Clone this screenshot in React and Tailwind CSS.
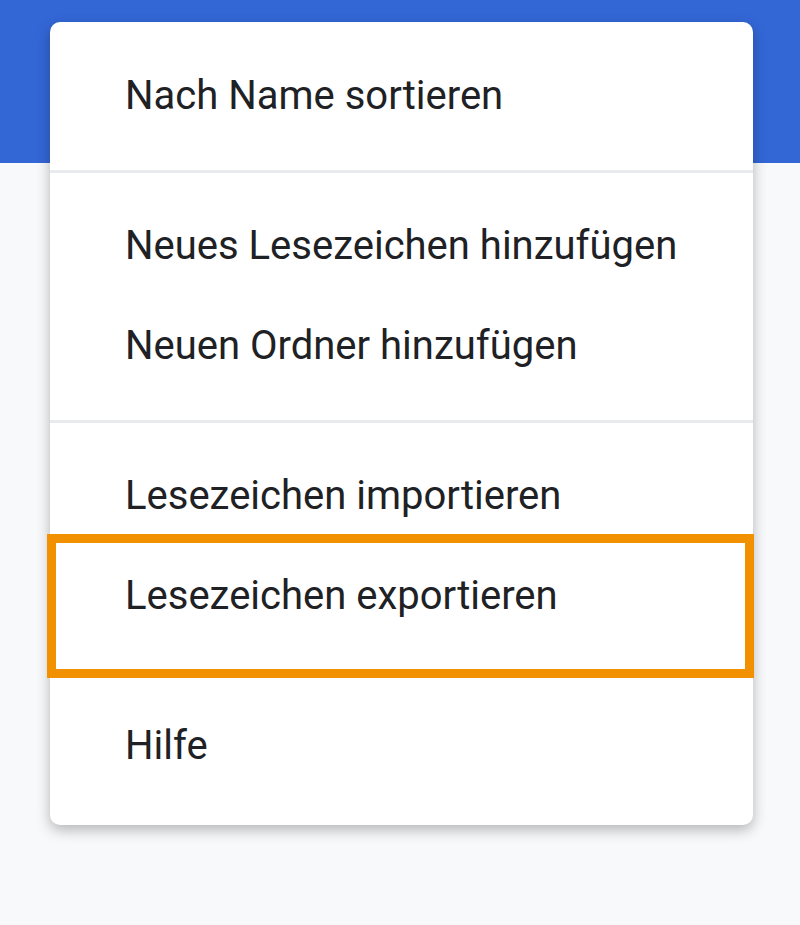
const sections = [
  ['Nach Name sortieren'],
  ['Neues Lesezeichen hinzufügen', 'Neuen Ordner hinzufügen'],
  ['Lesezeichen importieren', 'Lesezeichen exportieren'],
  ['Hilfe'],
];

export default function App() {
  return (
    <div className="relative h-[925px] w-[800px] overflow-hidden bg-[#f8f9fa] font-['Roboto','Liberation_Sans',sans-serif]">
      {/* blue toolbar strip */}
      <div className="h-[163px] w-full bg-[#3367d6]" />

      {/* dropdown menu */}
      <div className="absolute left-[50px] top-[22px] w-[703px] rounded-[10px] bg-white pb-[29px] pt-[24px] shadow-[0_5px_14px_rgba(0,0,0,0.28)]">
        {sections.map((items, i) => (
          <div key={i}>
            {i > 0 && (
              <div className="flex h-[50px] items-center">
                <div className="h-[3px] w-full bg-[#e8eaed]" />
              </div>
            )}
            {items.map((label) => (
              <div key={label} className="relative flex h-[100px] items-center pl-[75px] text-[40px] text-[#202124]">
                {label}
                {label === 'Lesezeichen exportieren' && (
                  <div className="absolute -left-[3px] -right-[1px] -top-[12px] h-[144px] border-[9px] border-[#f29100]" />
                )}
              </div>
            ))}
          </div>
        ))}
      </div>
    </div>
  );
}
